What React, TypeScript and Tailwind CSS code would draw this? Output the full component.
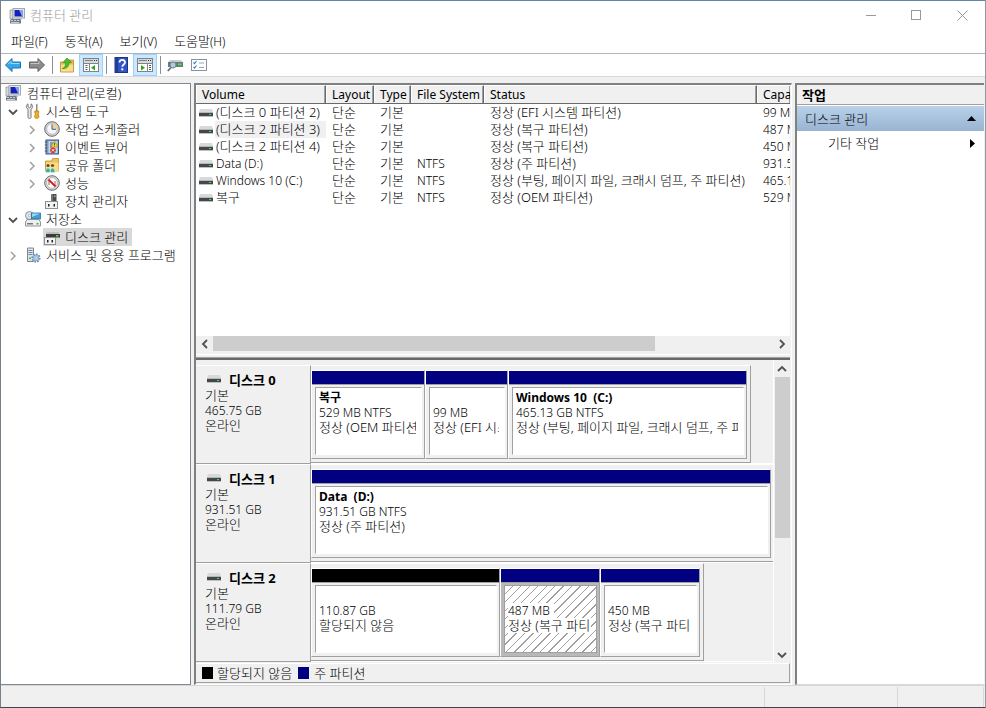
import { useState } from 'react';
import type { ReactNode } from 'react';
import clsx from 'clsx';

interface Volume {
  name: string;
  fs: string;
  status: string;
  capacity: string;
}

interface Partition {
  name?: string;
  size: string;
  status: string;
  width: string;
  unallocated?: boolean;
  selected?: boolean;
}

interface Disk {
  label: string;
  size: string;
  partitions: Partition[];
}

const volumes: Volume[] = [
  { name: '(디스크 0 파티션 2)', fs: '', status: '정상 (EFI 시스템 파티션)', capacity: '99 MB' },
  { name: '(디스크 2 파티션 3)', fs: '', status: '정상 (복구 파티션)', capacity: '487 MB' },
  { name: '(디스크 2 파티션 4)', fs: '', status: '정상 (복구 파티션)', capacity: '450 MB' },
  { name: 'Data (D:)', fs: 'NTFS', status: '정상 (주 파티션)', capacity: '931.51 GB' },
  { name: 'Windows 10 (C:)', fs: 'NTFS', status: '정상 (부팅, 페이지 파일, 크래시 덤프, 주 파티션)', capacity: '465.13 GB' },
  { name: '복구', fs: 'NTFS', status: '정상 (OEM 파티션)', capacity: '529 MB' },
];

const disks: Disk[] = [
  {
    label: '디스크 0',
    size: '465.75 GB',
    partitions: [
      { name: '복구', size: '529 MB NTFS', status: '정상 (OEM 파티션)', width: 'w-[114px]' },
      { size: '99 MB', status: '정상 (EFI 시스템 파티션)', width: 'w-[83px]' },
      { name: 'Windows 10  (C:)', size: '465.13 GB NTFS', status: '정상 (부팅, 페이지 파일, 크래시 덤프, 주 파티션)', width: 'w-[239px]' },
    ],
  },
  {
    label: '디스크 1',
    size: '931.51 GB',
    partitions: [{ name: 'Data  (D:)', size: '931.51 GB NTFS', status: '정상 (주 파티션)', width: 'w-[460px]' }],
  },
  {
    label: '디스크 2',
    size: '111.79 GB',
    partitions: [
      { size: '110.87 GB', status: '할당되지 않음', width: 'w-[189px]', unallocated: true },
      { size: '487 MB', status: '정상 (복구 파티션)', width: 'w-[100px]', selected: true },
      { size: '450 MB', status: '정상 (복구 파티션)', width: 'w-[100px]' },
    ],
  },
];

function Svg({ children }: { children: ReactNode }) {
  return (
    <svg width="16" height="16" viewBox="0 0 16 16" className="shrink-0" aria-hidden="true">
      {children}
    </svg>
  );
}

const ComputerIcon = () => (
  <Svg>
    <path d="M1 2h3v9H1z" fill="#d8dce0" stroke="#8a9096" strokeWidth="0.7" />
    <rect x="4" y="0.5" width="11.5" height="9.5" fill="#e8e8e0" stroke="#a4a8ac" />
    <rect x="5.5" y="2" width="8.5" height="6.5" fill="#1420b8" />
    <path d="M10 2h4v6.5h-1z" fill="#7da2f0" />
    <path d="M8 10h4l1 2H7z" fill="#b9bec4" />
    <path d="M2 11h9l1 2v2.5H1V13z" fill="#6f7a84" />
    <path d="M2 12.5h2M5 12.5h2M8 12.5h2M2 14.5h8" stroke="#dfe5ea" strokeWidth="0.8" />
  </Svg>
);

const ToolsIcon = () => (
  <Svg>
    <path d="M3 .8C.9 2 .8 5 3 6.200V14.500c0 1.300 3 1.300 3 0V6.200C8.200 5 8 2 6 .8v3L4.500 4.800 3 3.800z" fill="#e6e6e6" stroke="#6f6f6f" strokeWidth="0.9" />
    <path d="M11 1.500l1.500-1V8H11z" fill="#8a8a8a" />
    <path d="M9.800 8h3.900v2l-.6.800.8 3c0 2-4.300 2-4.300 0l.8-3-.6-.800z" fill="#f2b21d" stroke="#b77a05" strokeWidth="0.8" />
  </Svg>
);

const ClockIcon = () => (
  <Svg>
    <circle cx="8" cy="8" r="7.300" fill="#d4d4d4" stroke="#6a6a6a" />
    <circle cx="8" cy="8" r="5.300" fill="#f4f8fc" stroke="#a8a8a8" strokeWidth="0.6" />
    <path d="M8 8V2.700A5.300 5.300 0 0 1 13.300 8z" fill="#f5d28c" />
    <path d="M8 3.500V8.300H12" stroke="#3d5f8a" fill="none" />
  </Svg>
);

const EventIcon = () => (
  <Svg>
    <rect x="2" y="1" width="12.500" height="14" fill="#7f9fc8" stroke="#3d5a8c" />
    <rect x="4.500" y="2" width="9" height="12" fill="#c4d6ec" />
    <path d="M.8 3h2.400M.8 6h2.400M.8 9h2.400M.8 12h2.400" stroke="#555" />
    <path d="M6 4h3M6 6h2M6 8h2" stroke="#4a6691" />
    <path d="M10.500 2l3.500 6H7z" fill="#ffd72e" stroke="#a57e00" strokeWidth="0.6" />
    <path d="M10.500 4v2M10.500 6.600v.8" stroke="#333" strokeWidth="0.8" />
    <circle cx="9" cy="11.300" r="2.800" fill="#d93a32" />
    <path d="M7.900 10.200l2.200 2.200M10.100 10.200l-2.200 2.200" stroke="#fff" />
  </Svg>
);

const SharedFolderIcon = () => (
  <Svg>
    <path d="M1.500 5V14h13V1.500H8.500L7.500 4H1.500z" fill="#eec35a" stroke="#c0912f" strokeWidth="0.8" />
    <path d="M2 5.500h12.500v8.500H2z" fill="#f9dc85" />
    <circle cx="4" cy="8.500" r="1.600" fill="#6a4a2b" />
    <circle cx="8.500" cy="8.500" r="1.600" fill="#6a4a2b" />
    <path d="M1.500 15.500c0-6 5-6 5 0zM6 15.500c0-6 5-6 5 0z" fill="#3fae9d" stroke="#e9fbf7" strokeWidth="0.5" />
  </Svg>
);

const PerformanceIcon = () => (
  <Svg>
    <circle cx="8" cy="8" r="7.300" fill="#d8d8d8" stroke="#6a6a6a" />
    <circle cx="8" cy="8" r="5.300" fill="#fff" stroke="#9a9a9a" strokeWidth="0.6" />
    <path d="M5 10V5.500M11 6v5" fill="none" stroke="#c84a4a" />
    <path d="M4.500 4.500l7 7" stroke="#c82121" strokeWidth="1.800" />
  </Svg>
);

const DeviceIcon = () => (
  <Svg>
    <path d="M7 1h5.500v8H7z" fill="#4a4a4a" />
    <path d="M7 1h2v8H7z" fill="#777" />
    <rect x="10" y="2.500" width="1.500" height="1.500" fill="#5ee06a" />
    <rect x="1.500" y="8.500" width="12" height="7" fill="#f2f2f2" stroke="#8f8f8f" />
    <path d="M4 11h1.500v2.500H4zM9.500 11H11v2.500H9.500z" fill="#222" />
  </Svg>
);

const StorageIcon = () => (
  <Svg>
    <circle cx="4.500" cy="4.500" r="4" fill="#dfe4e8" stroke="#7a8289" strokeWidth="0.8" />
    <circle cx="4.500" cy="4.500" r="1.200" fill="#fff" stroke="#888" strokeWidth="0.5" />
    <rect x="6.500" y="2" width="9" height="6" fill="#3e9fd4" stroke="#2a6f9c" strokeWidth="0.8" />
    <path d="M7 2.500h8L7 6z" fill="#9bd6f2" />
    <path d="M2 8.500h12l1.500 2.500v4H.5v-4z" fill="#eee" stroke="#7c7c7c" strokeWidth="0.8" />
    <rect x="2" y="12" width="6" height="1.500" fill="#777" />
    <rect x="11.500" y="12" width="2" height="1.500" fill="#2eb83a" />
  </Svg>
);

const DiskManagementIcon = () => (
  <Svg>
    <path d="M3 3h11.500l1 2.500H1.500z" fill="#bdbdbd" />
    <rect x="2" y="5" width="14" height="3.500" fill="#3c3c3c" />
    <rect x="12" y="6" width="2.500" height="1.500" fill="#37e34a" />
    <rect x="0.500" y="8.500" width="11" height="7" fill="#f2f2f2" stroke="#8f8f8f" />
    <path d="M3 11h1.500v2.500H3zM7.500 11H9v2.500H7.500z" fill="#222" />
  </Svg>
);

const ServicesIcon = () => (
  <Svg>
    <path d="M2.500 1h6v13.500h-6z" fill="#dfe4e8" stroke="#7f878e" />
    <path d="M3.500 3.500h4M3.500 5.500h4M3.500 7.500h4" stroke="#6b8aa6" />
    <rect x="4" y="10.500" width="2" height="1.500" fill="#41b64d" />
    <circle cx="11" cy="11" r="3.800" fill="#c3d8ea" stroke="#6691b8" strokeWidth="1.600" strokeDasharray="1.700 1.200" />
    <circle cx="11" cy="11" r="2.700" fill="#c3d8ea" stroke="#6691b8" strokeWidth="0.6" />
    <circle cx="11" cy="11" r="1.200" fill="#fff" stroke="#6691b8" strokeWidth="0.6" />
  </Svg>
);

const DriveIcon = () => (
  <svg width="14" height="8" viewBox="0 0 14 8" className="shrink-0" aria-hidden="true">
    <path d="M1 0h12l1 3H0z" fill="#d6dadd" />
    <rect y="3" width="14" height="1" fill="#b4b8bb" />
    <rect y="4" width="14" height="3" fill="#45484b" />
    <path d="M0 7h14v1H0z" fill="#c0c0c0" />
    <rect x="10" y="5" width="2" height="1" fill="#35e04a" />
  </svg>
);

function Chevron({ dir, light }: { dir: 'left' | 'right' | 'up' | 'down'; light?: boolean }) {
  const paths = {
    left: 'M7 1L3 5l4 4',
    right: 'M3 1l4 4-4 4',
    up: 'M1 7l4-4 4 4',
    down: 'M1 3l4 4 4-4',
  };
  return (
    <svg width="10" height="10" viewBox="0 0 10 10" className="shrink-0" aria-hidden="true">
      <path d={paths[dir]} fill="none" stroke={light ? '#a0a0a0' : '#505050'} strokeWidth={light ? 1.5 : 1.8} />
    </svg>
  );
}

function ArrowIcon({ forward }: { forward?: boolean }) {
  return (
    <svg width="16" height="16" viewBox="0 0 16 16" aria-hidden="true">
      <path
        d={forward ? 'M15.500 8L9 1.500v3.500H.5v6H9v3.500z' : 'M.5 8L7 1.500v3.500h8.500v6H7v3.500z'}
        fill={forward ? '#8b8b8b' : '#35a7e6'}
        stroke={forward ? '#5f5f5f' : '#1673ad'}
      />
      <path d={forward ? 'M1.500 6.500h8.500V4' : 'M3 7.300L6 4.300V6.500h8.500'} fill="none" stroke={forward ? '#c4c4c4' : '#93dbfa'} />
    </svg>
  );
}

const UpFolderIcon = () => (
  <Svg>
    <path d="M1.500 5h4l1-2h8v12h-13z" fill="#e7b94e" stroke="#b98a2a" strokeWidth="0.8" />
    <path d="M2 7.500h12v7H2z" fill="#f8dd8c" />
    <path d="M3 11.500c3.500-1 3.500-3 3.500-6H4L8 1l4.500 4.500H10c0 4-2 6.500-7 6z" fill="#45c12c" stroke="#2b8a19" strokeWidth="0.6" />
  </Svg>
);

function PaneIcon({ right }: { right?: boolean }) {
  return (
    <Svg>
      <rect x="0.500" y="1.500" width="15" height="13" fill="#fff" stroke="#808489" />
      <path d="M1 2h14v4H1z" fill="#d5d8dc" />
      <path d="M2 3.500h8" stroke="#7d8288" />
      <path d="M11 3.500h1M13 3.500h1" stroke="#333" />
      <path d="M1 6.500h14" stroke="#808489" />
      {right ? (
        <>
          <path d="M10.500 6.500v8" stroke="#808489" />
          <path d="M12 8.500h2M12 10.500h2M12 12.500h2" stroke="#4c5560" />
          <path d="M4 8l4 2.700-4 2.700z" fill="#2ea51e" />
        </>
      ) : (
        <>
          <path d="M6.500 6.500v8" stroke="#808489" />
          <path d="M2.500 8.500h2M2.500 10.500h2M2.500 12.500h2" stroke="#4c5560" />
          <path d="M12 8l-4 2.700 4 2.700z" fill="#2ea51e" />
        </>
      )}
    </Svg>
  );
}

const HelpIcon = () => (
  <Svg>
    <rect x="2" y="0.500" width="12.500" height="15" fill="#2f55c4" stroke="#1c3580" />
    <path d="M2.500 1h2.500v14H2.500z" fill="#1d3c9b" />
    <path d="M6.500 5.500c0-3.500 5.500-3.300 5.500 0 0 2-2.700 2-2.700 4.300" fill="none" stroke="#fff" strokeWidth="1.800" />
    <rect x="8.300" y="11.300" width="2" height="2" fill="#fff" />
  </Svg>
);

const RescanIcon = () => (
  <Svg>
    <path d="M3 3h11l1.500 2H1.500z" fill="#c9cdd0" />
    <rect x="1" y="5" width="15" height="5" fill="#70777c" />
    <rect x="11" y="6.500" width="3.500" height="1.800" fill="#2df04c" />
    <circle cx="6" cy="8" r="3" fill="#aecbdf" stroke="#75828c" />
    <path d="M4 10.500L.8 14" stroke="#656d73" strokeWidth="1.800" />
  </Svg>
);

const ListIcon = () => (
  <Svg>
    <rect x="0.500" y="2.500" width="15" height="11" fill="#fff" stroke="#8c9196" />
    <path d="M2.500 5.500l1 1 2-2.500M2.500 10l1 1 2-2.500" fill="none" stroke="#2f86d1" strokeWidth="1.200" />
    <path d="M8 6h5M8 10.500h5" stroke="#9ea3a8" />
  </Svg>
);

function ToolButton({ label, active, children }: { label: string; active?: boolean; children: ReactNode }) {
  return (
    <button
      aria-label={label}
      className={clsx('flex h-[22px] w-6 items-center justify-center border', active ? 'border-[#99d1ff] bg-[#cce8ff]' : 'border-transparent')}
    >
      {children}
    </button>
  );
}

const ToolSeparator = () => <div className="mt-[2px] mr-[2px] ml-[3px] h-[18px] w-px bg-[#8d8d8d]" />;

interface TreeItemProps {
  label: string;
  icon: ReactNode;
  level: number;
  state?: 'open' | 'closed';
  selected?: boolean;
  onSelect: (label: string) => void;
}

function TreeItem({ label, icon, level, state, selected, onSelect }: TreeItemProps) {
  return (
    <li className={clsx('flex h-[18px] items-center', level === 1 && 'pl-[7px]', level === 2 && 'pl-[26px]')}>
      {level > 0 && (
        <span className="flex w-4 shrink-0 pt-[2px]">
          {state === 'open' && <Chevron dir="down" />}
          {state === 'closed' && <Chevron dir="right" light />}
        </span>
      )}
      <button
        onClick={() => onSelect(label)}
        className={clsx('flex h-[18px] items-center pr-1 whitespace-nowrap', level === 0 ? 'gap-[6px] pl-1' : 'gap-[5px] pl-px', selected && 'bg-[#d9d9d9]')}
      >
        {icon}
        <span>{label}</span>
      </button>
    </li>
  );
}

function PartitionBox({ part }: { part: Partition }) {
  return (
    <div className={clsx('flex shrink-0 flex-col border border-t-white border-r-[#a0a0a0] border-b-[#a0a0a0] border-l-white', part.width)}>
      <div className={clsx('h-[13px] shrink-0', part.unallocated ? 'bg-black' : 'bg-[#000080]')} />
      <div className={clsx('flex min-h-0 flex-1 border-t border-[#a0a0a0] pt-[2px] pr-[2px] pb-[3px] pl-[3px]', part.selected && 'bg-[#b9b9b9]')}>
        <div
          className={clsx(
            'min-w-0 flex-1 border pt-[2px] pr-[5px] pl-[3px]',
            part.selected
              ? 'border-[#a0a0a0] bg-[repeating-linear-gradient(135deg,#ffffff_0px,#ffffff_5px,#a0a0a0_5px,#a0a0a0_6px)]'
              : 'border-t-[#a0a0a0] border-r-white border-b-white border-l-[#a0a0a0] bg-white',
          )}
        >
          <div className="h-[15px] overflow-hidden text-xs/[15px] font-bold whitespace-pre">{part.name}</div>
          <div className="h-[15px] overflow-hidden text-xs/[15px] whitespace-nowrap">
            <span className="inline-block bg-white pr-1">{part.size}</span>
          </div>
          <div className="h-[15px] overflow-hidden text-[13px]/[15px] whitespace-nowrap">
            <span className="inline-block bg-white">{part.status}</span>
          </div>
        </div>
      </div>
    </div>
  );
}

function DiskRow({ disk }: { disk: Disk }) {
  return (
    <div className="flex h-[99px] shrink-0">
      <div className="w-[115px] shrink-0 border-t border-r border-b border-t-white border-r-[#a0a0a0] border-b-[#a0a0a0] pt-[6px] pl-[9px]">
        <div className="flex items-start gap-2 pl-[2px]">
          <span className="pt-[3px]">
            <DriveIcon />
          </span>
          <span className="text-[13px]/[16px] font-bold">{disk.label}</span>
        </div>
        <div className="text-[13px]/[15px]">기본</div>
        <div className="text-xs/[15px]">{disk.size}</div>
        <div className="text-[13px]/[15px]">온라인</div>
      </div>
      <div className="flex min-w-0 flex-1 overflow-hidden border-b border-b-white">
        <div className="flex shrink-0 border-t border-r border-b border-t-white border-r-[#a0a0a0] border-b-[#a0a0a0] pt-1 pr-[3px] pb-[3px]">
          {disk.partitions.map((p, i) => (
            <PartitionBox key={i} part={p} />
          ))}
        </div>
      </div>
    </div>
  );
}

function VolumeTable() {
  const columns = ['Volume', 'Layout', 'Type', 'File System', 'Status', 'Capacity'];
  return (
    <table className="w-full table-fixed border-separate border-spacing-0">
      <colgroup>
        <col className="w-[130px]" />
        <col className="w-12" />
        <col className="w-[37px]" />
        <col className="w-[73px]" />
        <col className="w-[273px]" />
        <col />
      </colgroup>
      <thead>
        <tr>
          {columns.map((c) => (
            <th key={c} className="h-[19px] overflow-hidden border-t border-r border-b border-t-white border-r-[#696969] border-b-[#696969] bg-[#f0f0f0] p-0 text-left text-xs/[17px] font-normal whitespace-nowrap last:border-r-0">
              <div className="border-r border-l border-r-[#a0a0a0] border-l-white pl-[5px]">{c}</div>
            </th>
          ))}
        </tr>
      </thead>
      <tbody>
        {volumes.map((v, i) => (
          <tr key={v.name} className="h-[17px] text-[13px]/[17px] whitespace-nowrap">
            <td className="p-0">
              <div className="flex items-center gap-[2px] pl-[3px]">
                <DriveIcon />
                <span className={clsx('px-px', i === 1 && 'flex-1 bg-[#f0f0f0]', /^[A-Z]/.test(v.name) && 'text-xs/[17px]')}>{v.name}</span>
              </div>
            </td>
            <td className="p-0 pl-[6px]">단순</td>
            <td className="p-0 pl-[6px]">기본</td>
            <td className="p-0 pl-[6px] text-xs/[17px]">{v.fs}</td>
            <td className="p-0 pl-[6px]">{v.status}</td>
            <td className="overflow-hidden p-0 pl-[6px] text-xs/[17px]">{v.capacity}</td>
          </tr>
        ))}
      </tbody>
    </table>
  );
}

export default function App() {
  const [selected, setSelected] = useState('디스크 관리');
  const item = (label: string, icon: ReactNode, level: number, state?: 'open' | 'closed') => (
    <TreeItem label={label} icon={icon} level={level} state={state} selected={selected === label} onSelect={setSelected} />
  );

  return (
    <div className="flex h-screen flex-col overflow-hidden border border-t-[#6085a6] border-r-[#8c9aa5] border-b-[#444444] border-l-[#77808a] bg-[#f0f0f0] font-['Noto_Sans','Noto_Sans_CJK_KR',sans-serif] text-[13px]/[18px] font-light text-black">
      {/* Title bar */}
      <header className="flex h-[29px] shrink-0 items-center bg-white pl-2">
        <ComputerIcon />
        <h1 className="flex-1 pb-px pl-[5px] text-[#999999]">컴퓨터 관리</h1>
        <button aria-label="최소화" className="flex h-full w-[46px] items-center justify-center">
          <svg width="11" height="11" viewBox="0 0 11 11"><path d="M0 5.500h10" stroke="#999" /></svg>
        </button>
        <button aria-label="최대화" className="flex h-full w-[45px] items-center justify-center">
          <svg width="11" height="11" viewBox="0 0 11 11"><rect x="0.500" y="0.500" width="9" height="9" fill="none" stroke="#999" /></svg>
        </button>
        <button aria-label="닫기" className="flex h-full w-[46px] items-center justify-center">
          <svg width="11" height="11" viewBox="0 0 11 11"><path d="M.5.500l10 10M10.500.500l-10 10" stroke="#999" /></svg>
        </button>
      </header>

      {/* Menu */}
      <nav className="flex h-6 shrink-0 items-center gap-[17px] border-b border-[#b0b5bd] bg-white pb-[2px] pl-[10px]">
        {[['파일', '(F)'], ['동작', '(A)'], ['보기', '(V)'], ['도움말', '(H)']].map(([name, key]) => (
          <button key={name}>
            {name}
            <span className="text-xs">{key}</span>
          </button>
        ))}
      </nav>

      {/* Toolbar */}
      <div className="flex h-[23px] shrink-0 items-start border-b border-[#d9d9d9] bg-white">
        <ToolButton label="뒤로"><ArrowIcon /></ToolButton>
        <ToolButton label="앞으로"><ArrowIcon forward /></ToolButton>
        <ToolSeparator />
        <ToolButton label="위로"><UpFolderIcon /></ToolButton>
        <ToolButton label="콘솔 트리 표시" active><PaneIcon /></ToolButton>
        <ToolSeparator />
        <ToolButton label="도움말"><HelpIcon /></ToolButton>
        <ToolButton label="작업 창 표시" active><PaneIcon right /></ToolButton>
        <ToolSeparator />
        <ToolButton label="다시 검사"><RescanIcon /></ToolButton>
        <ToolButton label="목록"><ListIcon /></ToolButton>
      </div>

      <main className="flex min-h-0 flex-1 gap-[3px] pt-[6px]">
        {/* Console tree */}
        <aside className="w-[190px] shrink-0 border-t border-r border-b border-[#828790] bg-white">
          <ul>
            {item('컴퓨터 관리(로컬)', <ComputerIcon />, 0)}
            {item('시스템 도구', <ToolsIcon />, 1, 'open')}
            {item('작업 스케줄러', <ClockIcon />, 2, 'closed')}
            {item('이벤트 뷰어', <EventIcon />, 2, 'closed')}
            {item('공유 폴더', <SharedFolderIcon />, 2, 'closed')}
            {item('성능', <PerformanceIcon />, 2, 'closed')}
            {item('장치 관리자', <DeviceIcon />, 2)}
            {item('저장소', <StorageIcon />, 1, 'open')}
            {item('디스크 관리', <DiskManagementIcon />, 2)}
            {item('서비스 및 응용 프로그램', <ServicesIcon />, 1, 'closed')}
          </ul>
        </aside>

        {/* Volume list and disk map */}
        <section className="flex min-w-0 flex-1 flex-col border-t-2 border-r border-b border-l-2 border-t-[#808080] border-r-white border-b-white border-l-[#808080] pr-px">
          <div className="flex h-[275px] shrink-0 flex-col border-b-2 border-[#696969]">
            <div className="min-h-0 flex-1 overflow-hidden bg-white">
              <VolumeTable />
            </div>
            <div className="flex h-[15px] shrink-0 items-center">
              <button aria-label="왼쪽으로" className="flex w-[17px] justify-center"><Chevron dir="left" /></button>
              <div className="h-full flex-1">
                <div className="h-full w-[79%] bg-[#cdcdcd]" />
              </div>
              <button aria-label="오른쪽으로" className="flex w-[17px] justify-center"><Chevron dir="right" /></button>
            </div>
            <div className="mt-[3px] h-1 shrink-0 border-t border-b border-t-white border-b-[#a0a0a0]" />
          </div>

          <div className="flex min-h-0 flex-1">
            <div className="flex min-w-0 flex-1 flex-col overflow-hidden pt-[5px]">
              {disks.map((d) => (
                <DiskRow key={d.label} disk={d} />
              ))}
            </div>
            <div className="flex w-[17px] shrink-0 flex-col items-center border-l border-white">
              <button aria-label="위로 스크롤" className="flex h-[17px] items-center"><Chevron dir="up" /></button>
              <div className="w-[15px] flex-1">
                <div className="h-3/5 bg-[#cdcdcd]" />
              </div>
              <button aria-label="아래로 스크롤" className="flex h-[17px] items-center"><Chevron dir="down" /></button>
            </div>
          </div>

          <div className="mb-px flex h-5 shrink-0 items-center border-t border-r border-b border-t-white border-r-[#a0a0a0] border-b-[#a0a0a0] pb-px pl-[6px]">
            <span className="h-3 w-[11px] bg-black" />
            <span className="pl-1">할당되지 않음</span>
            <span className="ml-[6px] h-3 w-[11px] bg-[#000080]" />
            <span className="pl-[5px]">주 파티션</span>
          </div>
        </section>

        {/* Actions */}
        <aside className="mr-px flex w-[189px] shrink-0 flex-col border-t-2 border-b border-l-2 border-t-[#808080] border-b-[#d9d9d9] border-l-[#808080] bg-white">
          <h2 className="h-5 shrink-0 border-b border-[#a0a0a0] bg-[#f0f0f0] pl-[5px] text-[13px]/[20px] font-bold">작업</h2>
          <button className="mt-px flex h-[25px] shrink-0 items-center justify-between bg-gradient-to-b from-[#b9d1ea] to-[#99b4d1] pr-2 pl-2">
            디스크 관리
            <svg width="9" height="5" viewBox="0 0 9 5" aria-hidden="true"><path d="M4.500 0L9 5H0z" /></svg>
          </button>
          <button className="flex h-6 shrink-0 items-center justify-between pr-[9px] pl-[31px]">
            기타 작업
            <svg width="5" height="9" viewBox="0 0 5 9" aria-hidden="true"><path d="M0 0l5 4.500L0 9z" /></svg>
          </button>
        </aside>
      </main>

      {/* Status bar */}
      <footer className="flex h-[22px] shrink-0 justify-end border-t border-[#d7d7d7] pt-px pr-px">
        <div className="w-[133px] border-l border-[#d7d7d7]" />
        <div className="w-[87px] border-r border-l border-[#d7d7d7]" />
      </footer>
    </div>
  );
}
